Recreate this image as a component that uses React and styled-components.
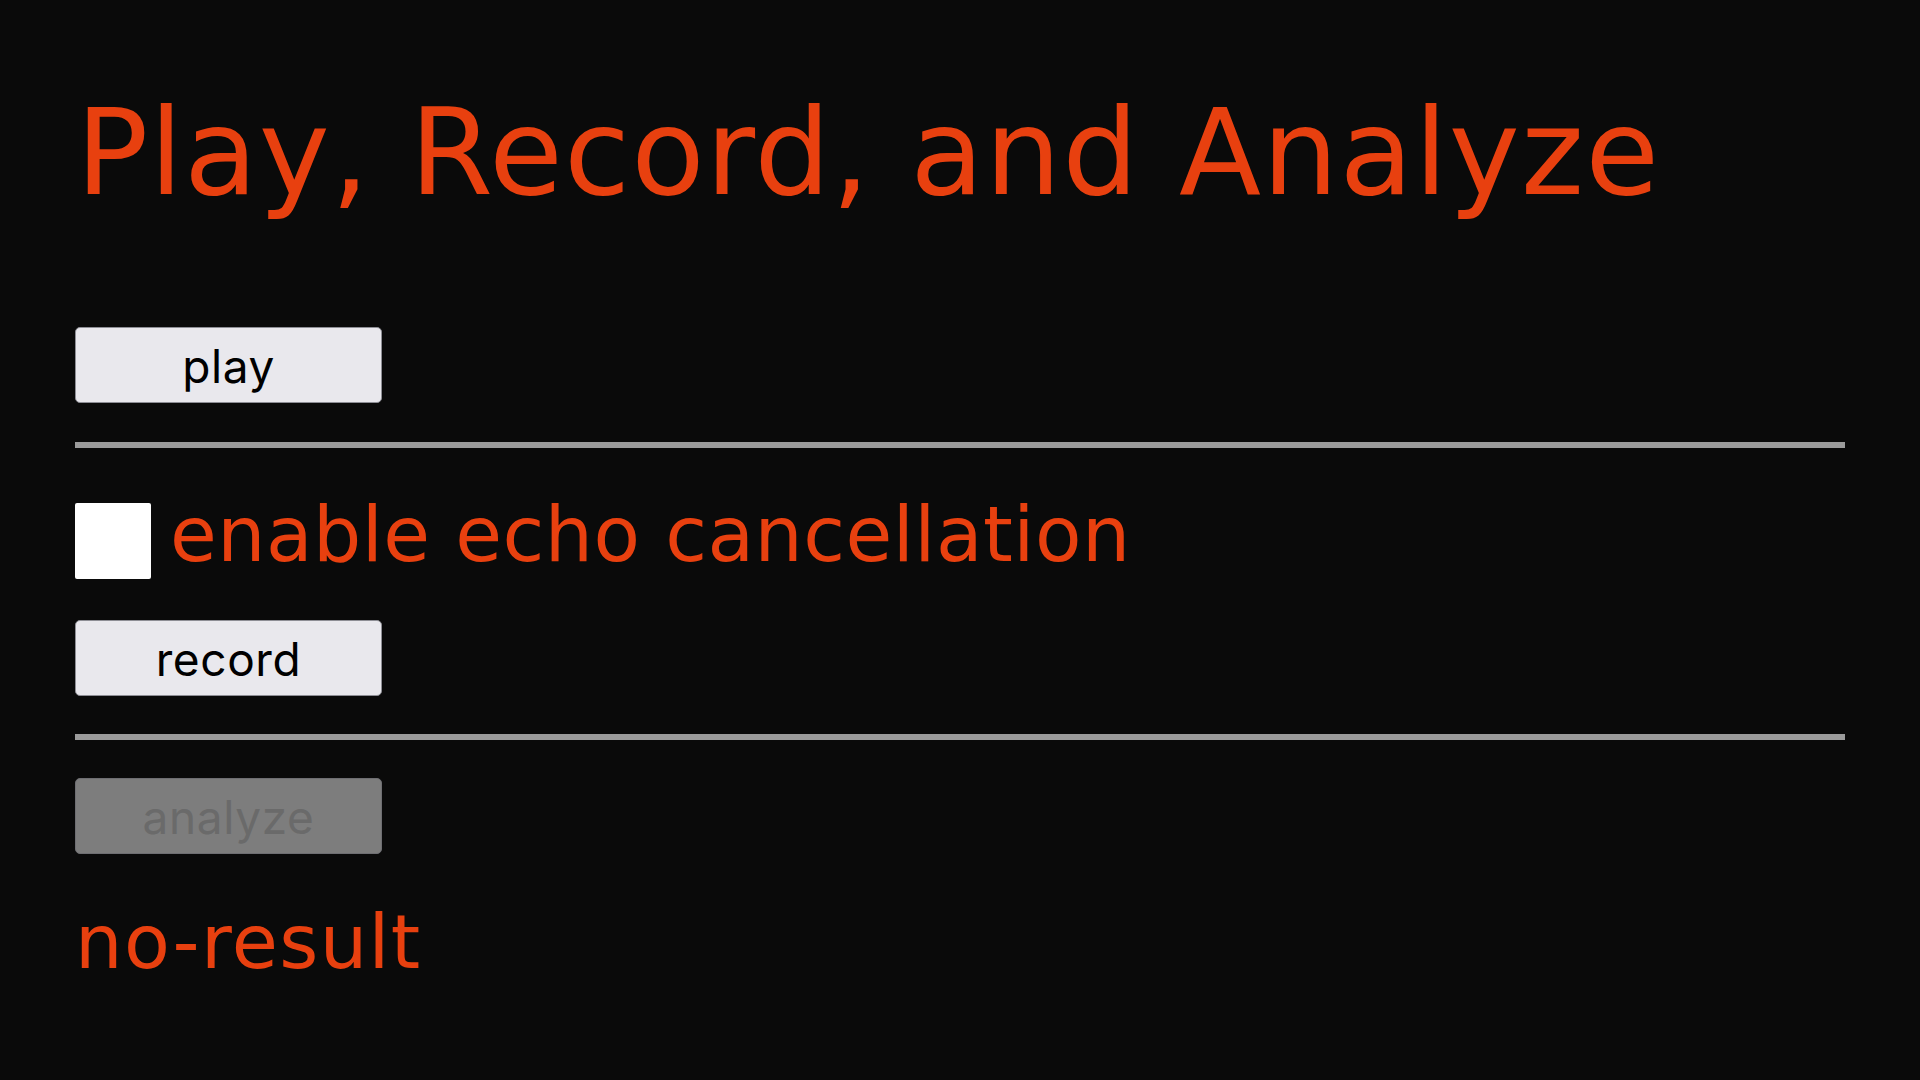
import React from 'react';
import styled, { createGlobalStyle } from 'styled-components';

const GlobalStyle = createGlobalStyle`
  html, body {
    margin: 0;
    padding: 0;
    background: #0a0a0a;
  }
`;

const Page = styled.main`
  min-height: 1080px;
  box-sizing: border-box;
  padding: 93px 75px 0;
  background: #0a0a0a;
  color: #e8400f;
  font-family: 'DejaVu Sans', sans-serif;
`;

const Title = styled.h1`
  margin: 0 0 0 1px;
  font-size: 120px;
  line-height: 120px;
  font-weight: 400;
  letter-spacing: 1.2px;
`;

const Button = styled.button`
  display: flex;
  align-items: center;
  justify-content: center;
  width: 307px;
  height: 76px;
  margin-top: ${(p) => p.$top}px;
  padding: 2px 0 0;
  box-sizing: border-box;
  border: 1px solid #8e8e95;
  border-radius: 5px;
  background: #e9e8ed;
  color: #000;
  font-family: Inter, 'Liberation Sans', sans-serif;
  font-size: 46px;
  letter-spacing: 0.6px;

  &:disabled {
    background: #7d7d7d;
    border-color: #6e6e72;
    color: #6a6a6a;
  }
`;

const Rule = styled.hr`
  margin: ${(p) => p.$top}px 0 0;
  height: 6px;
  border: none;
  background: #9b9b9b;
`;

const OptionRow = styled.label`
  display: flex;
  align-items: flex-start;
  gap: 19px;
  margin-top: 55px;
`;

const Box = styled.input`
  appearance: none;
  margin: 0;
  width: 76px;
  height: 76px;
  flex: none;
  background: #fff;
  border-radius: 2px;
`;

const OptionText = styled.span`
  font-size: 76px;
  line-height: 64px;
  letter-spacing: 0.5px;
`;

const Result = styled.p`
  margin: 51px 0 0;
  font-size: 75px;
  line-height: 75px;
  letter-spacing: 1.4px;
`;

export default function App() {
  return (
    <>
      <GlobalStyle />
      <Page>
        <Title>Play, Record, and Analyze</Title>
        <Button $top={114}>play</Button>
        <Rule $top={39} />
        <OptionRow>
          <Box type="checkbox" />
          <OptionText>enable echo cancellation</OptionText>
        </OptionRow>
        <Button $top={41}>record</Button>
        <Rule $top={38} />
        <Button $top={38} disabled>
          analyze
        </Button>
        <Result>no-result</Result>
      </Page>
    </>
  );
}
